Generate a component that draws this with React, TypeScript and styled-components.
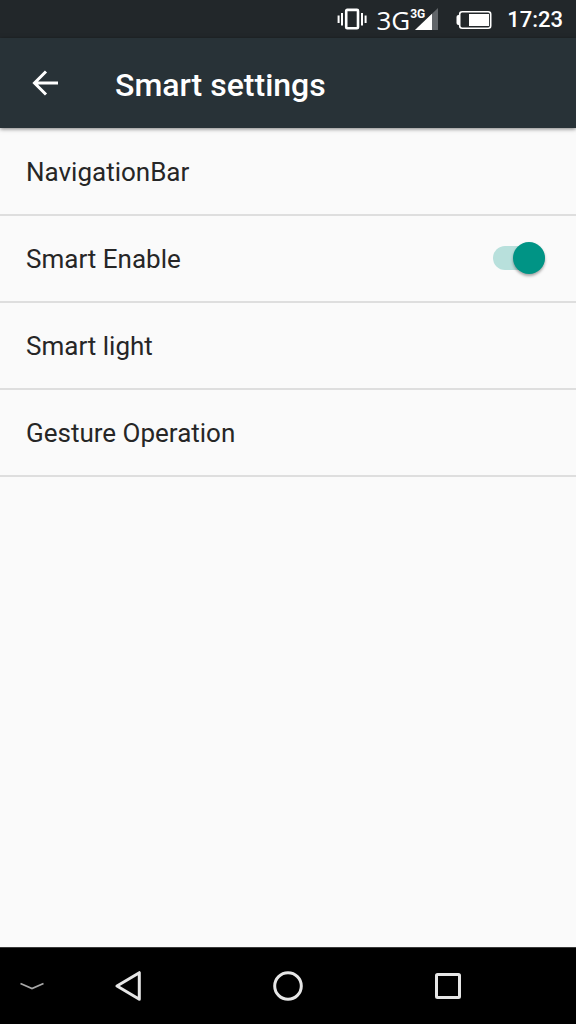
import React, { useState } from 'react';
import styled, { createGlobalStyle } from 'styled-components';

const GlobalStyle = createGlobalStyle`
  *, *::before, *::after { box-sizing: border-box; }
  body {
    margin: 0;
    background: #fafafa;
    color: #262626;
    font-family: Roboto, "Noto Sans", sans-serif;
  }
`;

const Screen = styled.div`
  display: flex;
  flex-direction: column;
  min-height: 100vh;
`;

const StatusBar = styled.div`
  display: flex;
  align-items: center;
  justify-content: flex-end;
  height: 38px;
  padding: 2px 13px 0 0;
  background: #22272a;
  color: #fff;

  svg { display: block; flex: none; }
`;

const Network = styled.div`
  display: flex;
  align-items: center;
  margin: 0 18px 0 9px;
  font-family: "Open Sans", sans-serif;
`;

const NetworkType = styled.span`
  font-size: 26px;
  line-height: 32px;
`;

const Signal = styled.span`
  display: grid;
  width: 28px;
  height: 24px;

  > * { grid-area: 1 / 1; }
`;

const SignalType = styled.span`
  font-family: Roboto, sans-serif;
  font-size: 12px;
  font-weight: 700;
  line-height: 12px;
`;

const Clock = styled.time`
  margin-left: 15px;
  font-size: 22px;
  font-weight: 500;
  line-height: 32px;
`;

const AppBar = styled.header`
  display: flex;
  align-items: center;
  height: 90px;
  padding-left: 13px;
  background: #283237;
  color: #fff;
  box-shadow: 0 1px 4px rgba(0, 0, 0, 0.5);
`;

const IconButton = styled.button`
  display: flex;
  align-items: center;
  justify-content: center;
  min-width: 0;
  height: 64px;
  padding: 0;
  border: 0;
  background: none;
  color: inherit;
  cursor: pointer;

  svg { display: block; }
`;

const BackButton = styled(IconButton)`
  width: 64px;
`;

const Title = styled.h1`
  margin: 0;
  padding: 4px 0 0 38px;
  font-size: 32px;
  font-weight: 500;
  line-height: 40px;
`;

const List = styled.ul`
  flex: 1;
  margin: 0;
  padding: 1px 0 0;
  list-style: none;
`;

const Item = styled.li`
  border-bottom: 2px solid #dedede;
`;

const Row = styled.button`
  display: flex;
  align-items: center;
  justify-content: space-between;
  width: 100%;
  height: 85px;
  padding: 0 31px 0 26px;
  border: 0;
  background: none;
  color: inherit;
  font: 400 26px/32px Roboto, "Noto Sans", sans-serif;
  text-align: left;
  cursor: pointer;
`;

const Switch = styled.input`
  display: flex;
  align-items: center;
  justify-content: ${(p) => (p.checked ? 'flex-end' : 'flex-start')};
  appearance: none;
  width: 52px;
  height: 24px;
  margin: 0 0 2px;
  border-radius: 12px;
  background: ${(p) => (p.checked ? '#b8e0dc' : '#b9b9b9')};
  cursor: pointer;

  &::before {
    content: '';
    width: 32px;
    height: 32px;
    flex: none;
    border-radius: 50%;
    background: ${(p) => (p.checked ? '#009485' : '#f1f1f1')};
    box-shadow: 0 2px 3px rgba(0, 0, 0, 0.35);
  }
`;

const NavBar = styled.nav`
  display: grid;
  grid-template-columns: 1fr 2fr 3fr 2fr 1fr;
  align-items: center;
  height: 77px;
  border-top: 1px solid #3a3a3a;
  background: #000;
  color: #e6e6e6;
`;

export default function App() {
  const [enabled, setEnabled] = useState(true);

  return (
    <Screen>
      <GlobalStyle />
      <StatusBar>
        <svg width="30" height="24" viewBox="0 0 30 24" fill="none" stroke="#fff" strokeWidth="2">
          <rect x="9.2" y="1.9" width="11.8" height="18.4" rx="1" strokeWidth="2.6" />
          <path d="M5 5v12.500M25 5v12.500M1.600 7.500v7.500M28.600 7.500v7.500" />
        </svg>
        <Network>
          <NetworkType>3G</NetworkType>
          <Signal>
            <SignalType>3G</SignalType>
            <svg width="28" height="24" viewBox="0 0 28 24">
              <path d="M28 0v22H5z" fill="#62666a" />
              <path d="M22 5.700v16.300H5z" fill="#fff" />
            </svg>
          </Signal>
        </Network>
        <svg width="36" height="20" viewBox="0 0 36 20">
          <path d="M3.500 5H2.500Q.500 5 .500 7v6q0 2 2 2h1z" fill="#fff" />
          <rect x="3.700" y="1.700" width="31" height="16.600" rx="2.500" fill="none" stroke="#fff" strokeWidth="1.600" />
          <path d="M13 4h20v12H13z" fill="#fff" />
        </svg>
        <Clock dateTime="17:23">17:23</Clock>
      </StatusBar>

      <AppBar>
        <BackButton type="button" aria-label="Back">
          <svg width="26" height="26" viewBox="0 0 26 26" fill="none" stroke="currentColor" strokeWidth="3">
            <path d="M26 13H2.500M14 1.500L2.500 13 14 24.500" />
          </svg>
        </BackButton>
        <Title>Smart settings</Title>
      </AppBar>

      <List>
        <Item><Row type="button">NavigationBar</Row></Item>
        <Item>
          <Row as="label" htmlFor="smart-enable">
            Smart Enable
            <Switch
              id="smart-enable"
              type="checkbox"
              role="switch"
              checked={enabled}
              onChange={(e) => setEnabled(e.target.checked)}
            />
          </Row>
        </Item>
        <Item><Row type="button">Smart light</Row></Item>
        <Item><Row type="button">Gesture Operation</Row></Item>
      </List>

      <NavBar aria-label="System">
        <IconButton type="button" aria-label="Hide navigation bar">
          <svg width="24" height="8" viewBox="0 0 24 8" fill="none" stroke="#a8a8a8" strokeWidth="1.800">
            <path d="M.5 1.500L12 6.500 23.500 1.500" />
          </svg>
        </IconButton>
        <IconButton type="button" aria-label="Back">
          <svg width="26" height="30" viewBox="0 0 26 30" fill="none" stroke="currentColor" strokeWidth="3" strokeLinejoin="round">
            <path d="M24.300 1.700v26.600L2 15z" />
          </svg>
        </IconButton>
        <IconButton type="button" aria-label="Home">
          <svg width="30" height="30" viewBox="0 0 30 30" fill="none" stroke="currentColor" strokeWidth="3">
            <circle cx="15" cy="15" r="13.300" />
          </svg>
        </IconButton>
        <IconButton type="button" aria-label="Recent apps">
          <svg width="28" height="28" viewBox="0 0 28 28" fill="none" stroke="currentColor" strokeWidth="3">
            <rect x="2.500" y="2.500" width="23" height="23" rx="1" />
          </svg>
        </IconButton>
      </NavBar>
    </Screen>
  );
}
